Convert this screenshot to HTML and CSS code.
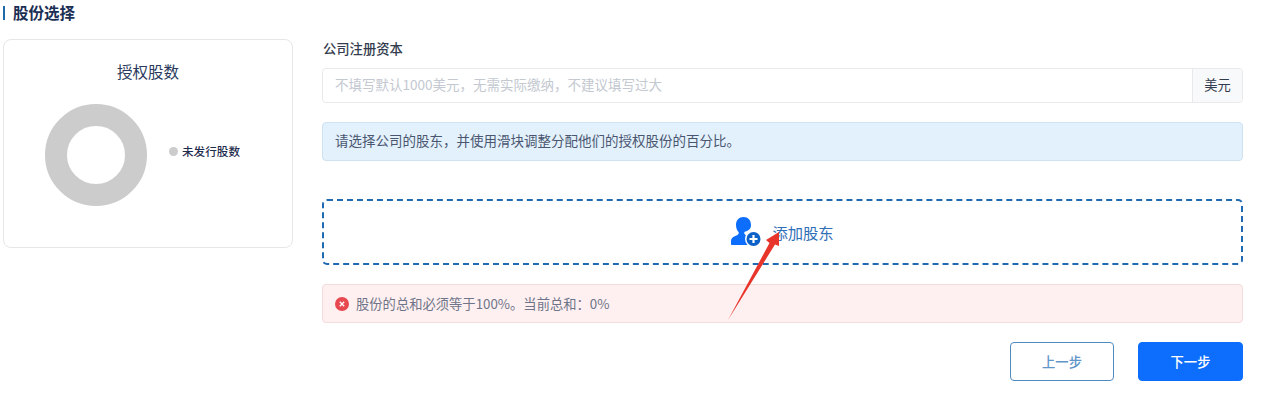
FILE: index.html
```html
<!DOCTYPE html>
<html>

<head>
    <title>股份选择</title>
    <link rel="stylesheet" href="styles.css">
</head>

<body>
    <div id="page">
        <h2 class="section-title">股份选择</h2>
        <div class="content">
            <div class="chart-card">
                <div class="chart-title">授权股数</div>
                <div class="chart-body">
                    <svg class="donut" width="102" height="102" viewBox="0 0 102 102">
                        <circle cx="51" cy="51" r="40" fill="none" stroke="#cccccc" stroke-width="22"></circle>
                    </svg>
                    <div class="legend">
                        <span class="legend-dot"></span>
                        <span>未发行股数</span>
                    </div>
                </div>
            </div>

            <div class="form">
                <label class="field-label">公司注册资本</label>
                <div class="input-group">
                    <input class="capital-input" type="text" placeholder="不填写默认1000美元，无需实际缴纳，不建议填写过大">
                    <span class="input-unit">美元</span>
                </div>

                <div class="alert alert-info">请选择公司的股东，并使用滑块调整分配他们的授权股份的百分比。</div>

                <div class="add-box">
                    <svg class="add-icon" width="32" height="32" viewBox="0 0 32 32">
                        <!-- person -->
                        <path fill="#0d6efd" d="M12.500 1C8 1 5 4.200 5 9c0 3 1 5.300 2.300 6.800.6.700.6 1.600.1 2.300-.7 1-2 1.500-3.700 2.200C1.700 21.300 0 22.500 0 25v3c0 .6.400 1 1 1h20c.6 0 1-.4 1-1v-3c0-2.500-1.700-3.700-4.700-4.700-1.700-.7-3-1.200-3.700-2.200-.5-.7-.5-1.600.1-2.300C19 14.300 20 12 20 9c0-4.800-3-8-7.500-8z"></path>
                        <!-- plus badge -->
                        <circle cx="22.500" cy="23" r="8.500" fill="#ffffff"></circle>
                        <circle cx="22.500" cy="23" r="7" fill="#0d62c9"></circle>
                        <path stroke="#ffffff" stroke-width="2.200" d="M22.500 19v8M18.500 23h8"></path>
                    </svg>
                    <span class="add-text">添加股东</span>
                </div>

                <div class="alert alert-error">
                    <svg class="error-icon" width="14" height="14" viewBox="0 0 14 14">
                        <circle cx="7" cy="7" r="7" fill="#e8484f"></circle>
                        <path stroke="#ffffff" stroke-width="1.400" d="M4.800 4.800l4.400 4.400M9.200 4.800l-4.400 4.400"></path>
                    </svg>
                    <span>股份的总和必须等于100%。当前总和：0%</span>
                </div>

                <div class="actions">
                    <button class="btn btn-prev">上一步</button>
                    <button class="btn btn-next">下一步</button>
                </div>
            </div>
        </div>
    </div>

    <!-- red annotation arrow drawn over the page -->
    <svg class="arrow" width="60" height="96" viewBox="0 0 60 96">
        <path fill="#e8352b" d="M1 92 L42.500 15 L39 12 L52 4 L52 18 L48 16.500 Z"></path>
    </svg>
</body>
</html>
```

FILE: styles.css
```css
* {
    box-sizing: border-box;
}

body {
    margin: 0;
    background-color: #ffffff;
    font-family: "Noto Sans CJK SC", "Liberation Sans", sans-serif;
    color: #1f2d4d;
    font-size: 13.3px;
}

#page {
    padding: 2px 18px 0 3px;
}

.section-title {
    margin: 0 0 16px 0;
    padding-left: 10px;
    height: 21px;
    line-height: 21px;
    font-size: 15.5px;
    font-weight: 700;
    color: #1b2f55;
    position: relative;
}

.section-title::before {
    content: "";
    position: absolute;
    left: 0;
    top: 4px;
    width: 2px;
    height: 14px;
    background-color: #1f6aa8;
}

.content {
    display: flex;
    align-items: flex-start;
    gap: 29px;
}

/* Left card */
.chart-card {
    width: 290px;
    height: 209px;
    flex-shrink: 0;
    border: 1px solid #e6e6e6;
    border-radius: 8px;
    padding-top: 19px;
}

.chart-title {
    text-align: center;
    font-size: 15.5px;
    line-height: 24px;
    color: #2a3a5c;
}

.chart-body {
    display: flex;
    align-items: flex-start;
    margin-top: 21px;
    padding-left: 41px;
}

.donut {
    display: block;
}

.legend {
    display: flex;
    align-items: center;
    gap: 4px;
    margin: 37px 0 0 22px;
    font-size: 11.6px;
    font-weight: 500;
    line-height: 20px;
    color: #1f2d4d;
}

.legend-dot {
    width: 9px;
    height: 9px;
    border-radius: 50%;
    background-color: #cccccc;
}

/* Right form */
.form {
    flex: 1;
    min-width: 0;
}

.field-label {
    display: block;
    height: 29px;
    line-height: 20px;
    padding-left: 1px;
    font-weight: 500;
    color: #333c4e;
}

.input-group {
    display: flex;
    height: 35px;
    border: 1px solid #e9e9e9;
    border-radius: 4px;
    margin-bottom: 19px;
}

.capital-input {
    flex: 1;
    min-width: 0;
    border: none;
    outline: none;
    padding: 0 12px 3px 12px;
    border-radius: 4px;
    font-family: inherit;
    font-size: 13.5px;
}

.capital-input::placeholder {
    color: #c3c8d1;
    opacity: 1;
}

.input-unit {
    width: 50px;
    display: flex;
    justify-content: center;
    align-items: center;
    padding-bottom: 2px;
    border-left: 1px solid #e9e9e9;
    background-color: #f8f9fa;
    border-radius: 0 4px 4px 0;
    color: #333c4e;
}

.alert {
    height: 39px;
    display: flex;
    align-items: center;
    padding: 0 12px;
    border-radius: 4px;
}

.alert-info {
    background-color: #e3f1fc;
    border: 1px solid #cfe2f0;
    padding-bottom: 3px;
    color: #4a5670;
    font-size: 13.5px;
}

.alert-error {
    background-color: #fef0f0;
    border: 1px solid #f3dcdc;
    color: #6f7488;
    gap: 7px;
}

.add-box {
    display: flex;
    justify-content: center;
    align-items: center;
    gap: 9px;
    height: 66px;
    margin: 38px 0 19px 0;
    border: 2px dashed #1f6ab0;
    border-radius: 5px;
}

.add-icon {
    display: block;
}

.add-text {
    font-size: 15.3px;
    color: #2f6fb8;
}

.actions {
    display: flex;
    justify-content: flex-end;
    gap: 24px;
    margin-top: 19px;
}

.btn {
    height: 39px;
    border-radius: 4px;
    font-family: inherit;
    font-size: 13.3px;
    font-weight: 500;
    cursor: pointer;
}

.btn-prev {
    width: 104px;
    background-color: #ffffff;
    border: 1px solid #4f8bc0;
    color: #5f95c9;
}

.btn-next {
    width: 105px;
    background-color: #0d6efd;
    border: 1px solid #0d6efd;
    color: #ffffff;
}

.arrow {
    position: absolute;
    left: 727px;
    top: 228px;
}
```
